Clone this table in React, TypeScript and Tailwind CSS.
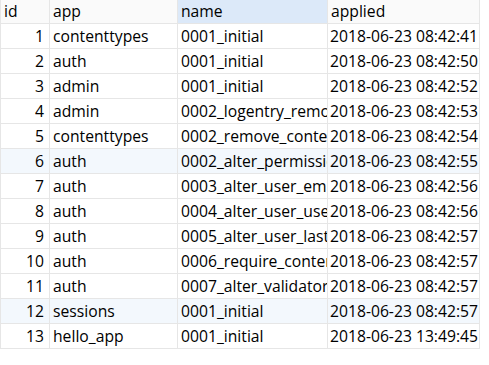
const rows: [number, string, string, string][] = [
  [1, 'contenttypes', '0001_initial', '2018-06-23 08:42:41'],
  [2, 'auth', '0001_initial', '2018-06-23 08:42:50'],
  [3, 'admin', '0001_initial', '2018-06-23 08:42:52'],
  [4, 'admin', '0002_logentry_remove_auto_add', '2018-06-23 08:42:53'],
  [5, 'contenttypes', '0002_remove_content_type_name', '2018-06-23 08:42:54'],
  [6, 'auth', '0002_alter_permission_name_max_length', '2018-06-23 08:42:55'],
  [7, 'auth', '0003_alter_user_email_max_length', '2018-06-23 08:42:56'],
  [8, 'auth', '0004_alter_user_username_opts', '2018-06-23 08:42:56'],
  [9, 'auth', '0005_alter_user_last_login_null', '2018-06-23 08:42:57'],
  [10, 'auth', '0006_require_contenttypes_0002', '2018-06-23 08:42:57'],
  [11, 'auth', '0007_alter_validators_add_error_messages', '2018-06-23 08:42:57'],
  [12, 'sessions', '0001_initial', '2018-06-23 08:42:57'],
  [13, 'hello_app', '0001_initial', '2018-06-23 13:49:45'],
];

// rows with the pale blue tint
const tinted = [6, 12];

const cell = 'h-[25px] pt-[2px] border-r border-b border-[#e6e6e6] overflow-hidden whitespace-nowrap flex items-center';
const head = 'h-[24px] pt-[1px] border-r border-b border-[#e6e6e6] overflow-hidden whitespace-nowrap flex items-center pl-[3px]';

export default function App() {
  return (
    <div className="w-[489px] h-[365px] bg-white text-[15.7px] text-black font-['Open_Sans','Noto_Sans',sans-serif] leading-none">
      <div className="grid grid-cols-[49px_128px_150px_152px] w-[480px] border-l border-[#e6e6e6]">
        <div className={head + ' bg-[#fafafa]'}>id</div>
        <div className={head + ' bg-[#fafafa]'}>app</div>
        <div className={head + ' bg-[#dce9f9]'}>name</div>
        <div className={head + ' bg-[#fafafa]'}>applied</div>

        {rows.map(([id, app, name, applied]) => {
          const bg = tinted.includes(id) ? ' bg-[#f3f8fd]' : ' bg-white';
          return (
            <div key={id} className="contents">
              <div className={cell + bg + ' justify-end pr-[5px]'}>{id}</div>
              <div className={cell + bg + ' pl-[3px]'}>{app}</div>
              <div className={cell + bg + ' pl-[3px]'}>{name}</div>
              <div className={cell + bg + ' pl-[2px]'}>{applied}</div>
            </div>
          );
        })}
      </div>
    </div>
  );
}
